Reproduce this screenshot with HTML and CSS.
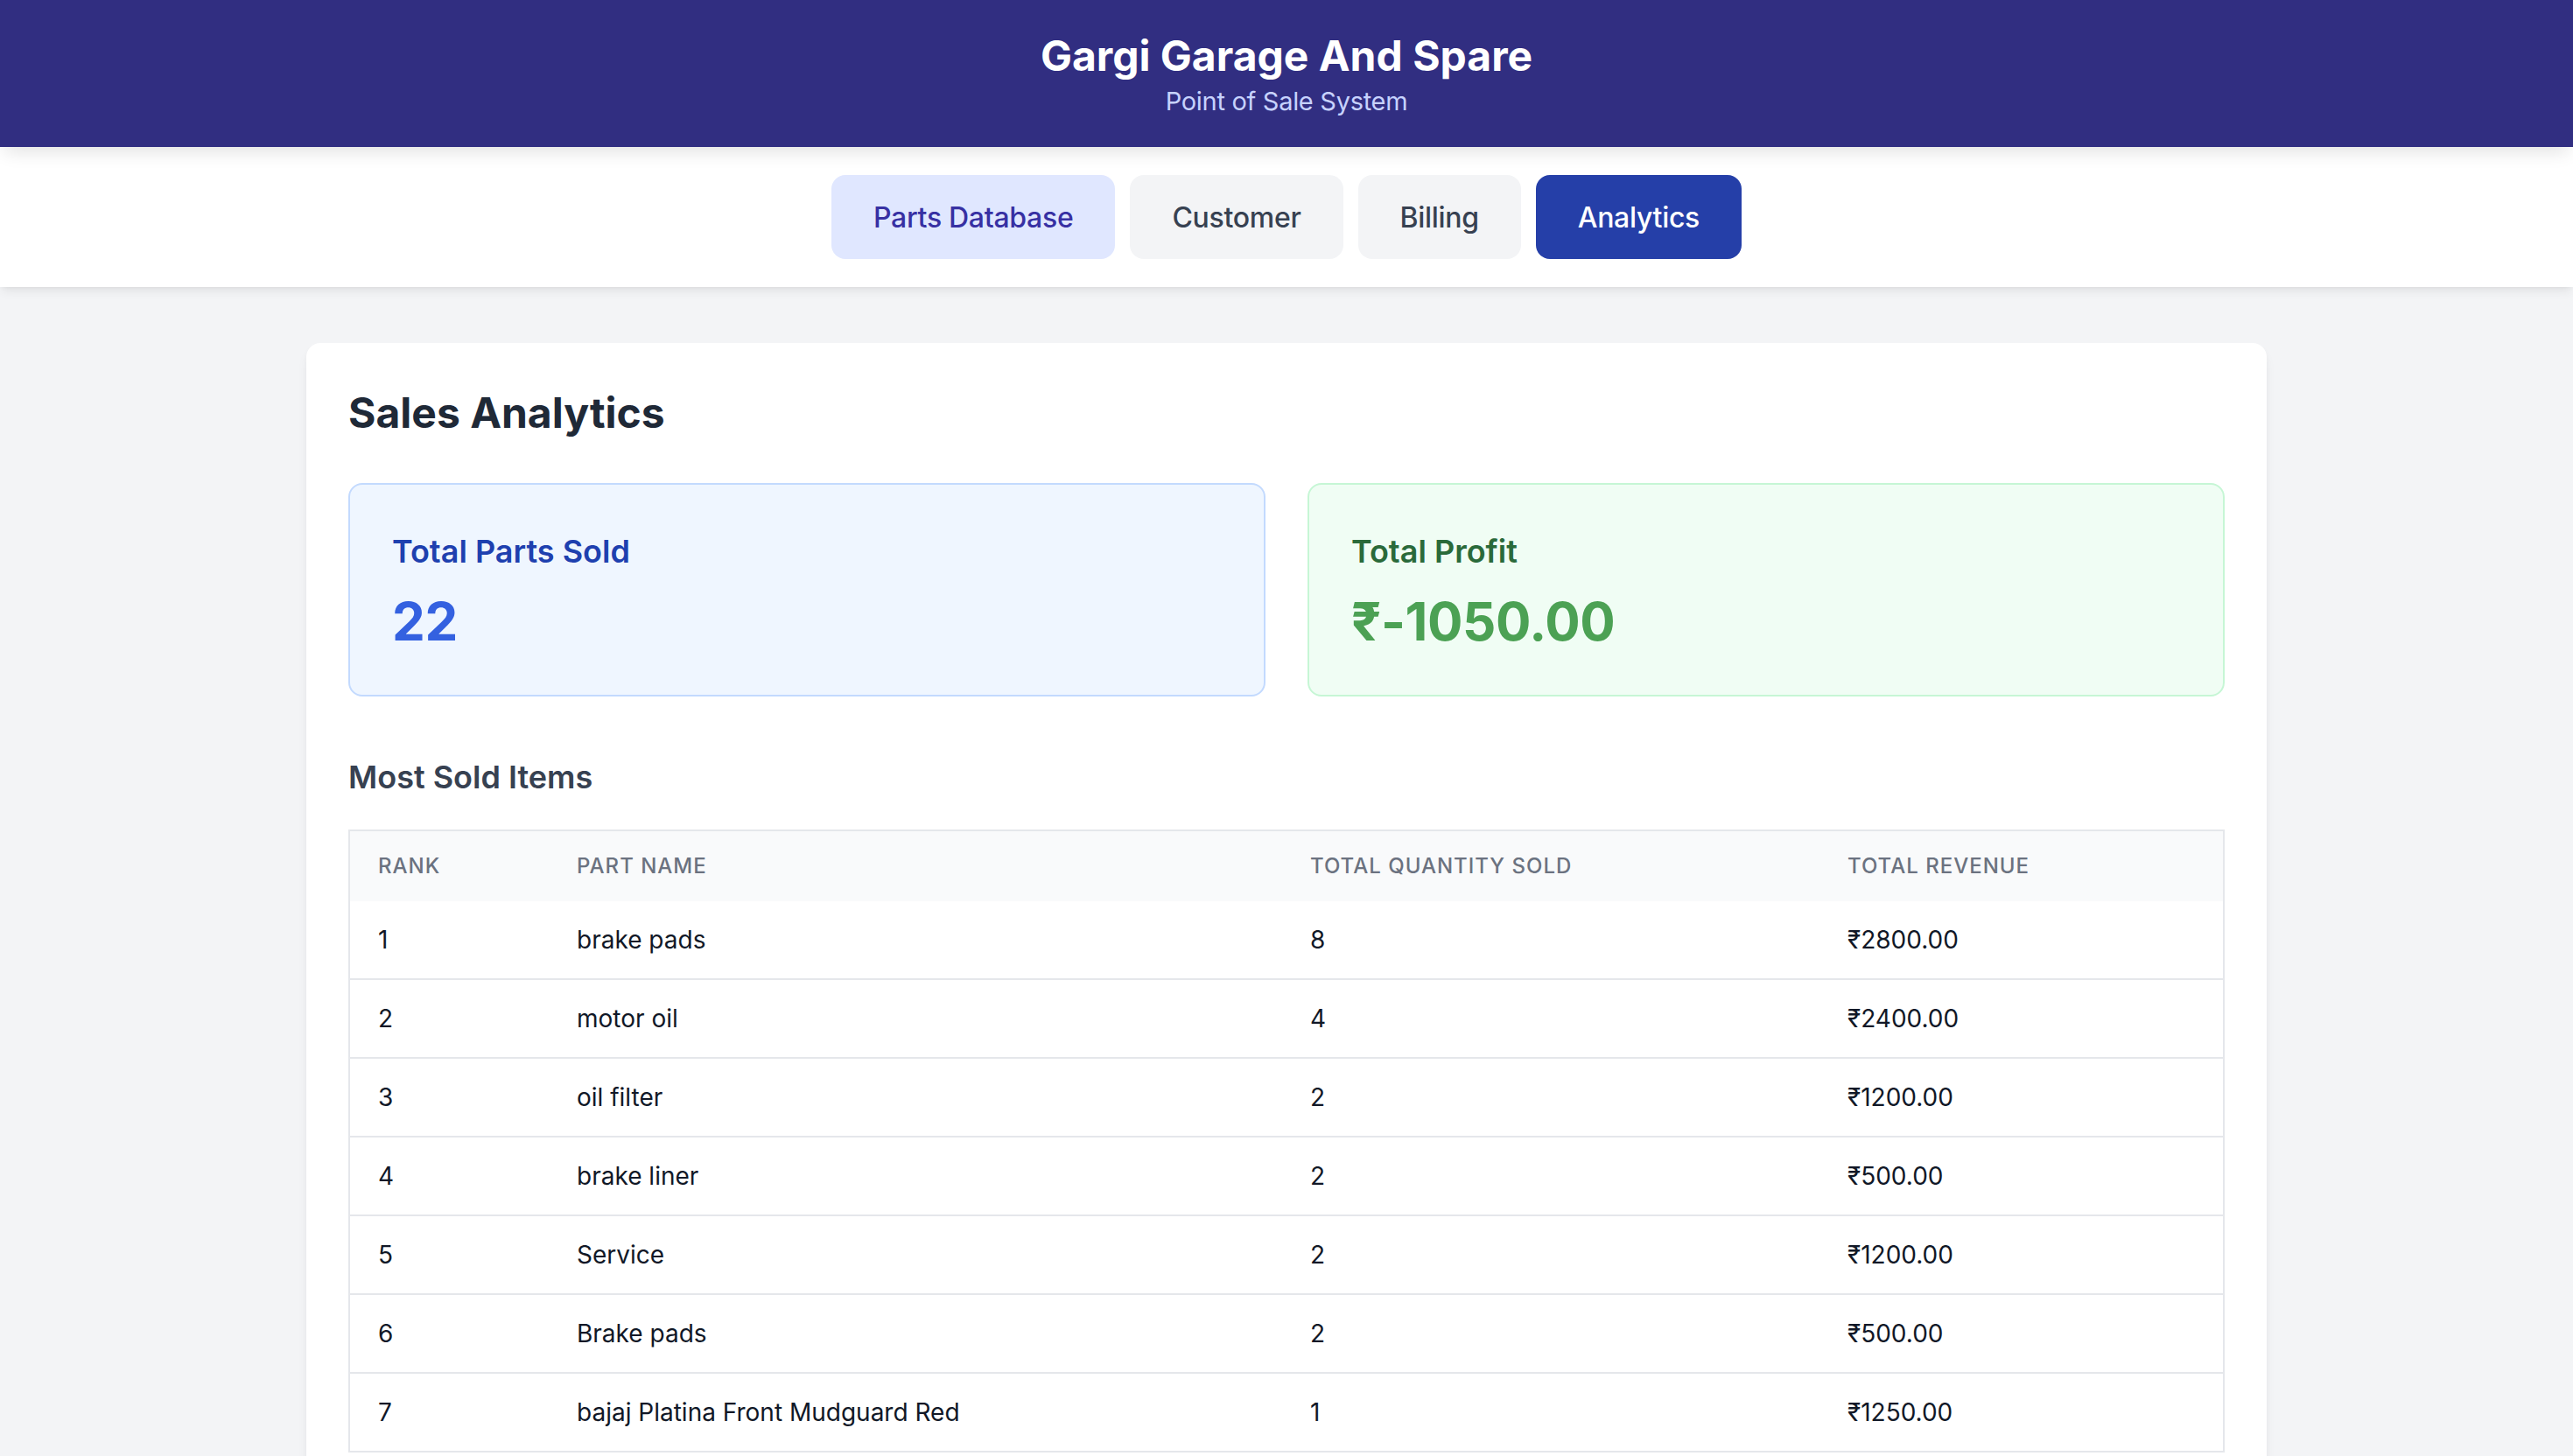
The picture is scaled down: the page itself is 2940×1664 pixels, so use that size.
FILE: index.html
```html
<!DOCTYPE html>
<html lang="en">
<head>
<meta charset="utf-8">
<title>Gargi Garage And Spare - POS</title>
<link rel="stylesheet" href="styles.css">
</head>
<body>
<header class="app-header">
  <h1 class="app-title">Gargi Garage And Spare</h1>
  <p class="app-subtitle">Point of Sale System</p>
</header>
<nav class="tabs">
  <button class="tab tab-soft">Parts Database</button>
  <button class="tab">Customer</button>
  <button class="tab">Billing</button>
  <button class="tab tab-active">Analytics</button>
</nav>
<main class="page">
  <section class="card">
    <h2 class="card-title">Sales Analytics</h2>
    <div class="stats">
      <div class="stat stat-blue">
        <h3 class="stat-label">Total Parts Sold</h3>
        <p class="stat-value">22</p>
      </div>
      <div class="stat stat-green">
        <h3 class="stat-label">Total Profit</h3>
        <p class="stat-value">₹-1050.00</p>
      </div>
    </div>
    <h3 class="section-title">Most Sold Items</h3>
    <table class="items">
      <colgroup>
        <col class="c-rank"><col class="c-name"><col class="c-qty"><col class="c-rev">
      </colgroup>
      <thead>
        <tr><th>Rank</th><th>Part Name</th><th>Total Quantity Sold</th><th>Total Revenue</th></tr>
      </thead>
      <tbody>
        <tr><td>1</td><td>brake pads</td><td>8</td><td>₹2800.00</td></tr>
        <tr><td>2</td><td>motor oil</td><td>4</td><td>₹2400.00</td></tr>
        <tr><td>3</td><td>oil filter</td><td>2</td><td>₹1200.00</td></tr>
        <tr><td>4</td><td>brake liner</td><td>2</td><td>₹500.00</td></tr>
        <tr><td>5</td><td>Service</td><td>2</td><td>₹1200.00</td></tr>
        <tr><td>6</td><td>Brake pads</td><td>2</td><td>₹500.00</td></tr>
        <tr><td>7</td><td>bajaj Platina Front Mudguard Red</td><td>1</td><td>₹1250.00</td></tr>
      </tbody>
    </table>
  </section>
</main>
</body>
</html>
```
FILE: styles.css
```css
html {
  scrollbar-width: none;
}
html::-webkit-scrollbar {
  display: none;
}
* {
  box-sizing: border-box;
}
body {
  margin: 0;
  background: #f3f4f6;
  font-family: Inter, "Noto Sans", "Liberation Sans", sans-serif;
  color: #111827;
}
.app-header {
  position: relative;
  z-index: 2;
  background: #312e81;
  color: #fff;
  text-align: center;
  padding: 35px 0 30px;
  height: 168px;
  box-shadow: 0 10px 20px -5px rgba(0, 0, 0, 0.12);
}
.app-title {
  margin: 0;
  font-size: 48px;
  line-height: 58px;
  font-weight: 700;
}
.app-subtitle {
  margin: 0;
  font-size: 29px;
  line-height: 45px;
  color: #c7d2fe;
  letter-spacing: -0.3px;
}
.tabs {
  position: relative;
  z-index: 1;
  background: #fff;
  height: 160px;
  display: flex;
  justify-content: center;
  align-items: center;
  gap: 17px;
  box-shadow: 0 6px 12px -2px rgba(0, 0, 0, 0.08), 0 3px 6px -3px rgba(0, 0, 0, 0.06);
}
.tab {
  border: 0;
  height: 96px;
  padding: 0 48px;
  border-radius: 16px;
  background: #f3f4f6;
  color: #374151;
  font-family: inherit;
  font-size: 32px;
  font-weight: 500;
  letter-spacing: -0.3px;
  line-height: 45px;
}
.tab-soft {
  background: #e0e7ff;
  color: #3730a3;
}
.tab-active {
  background: #253fa8;
  color: #fff;
}
.page {
  padding: 64px 0;
}
.card {
  width: 2240px;
  margin: 0 auto;
  background: #fff;
  border-radius: 16px;
  padding: 48px;
  box-shadow: 0 8px 14px -3px rgba(0, 0, 0, 0.08), 0 3px 6px -2px rgba(0, 0, 0, 0.05);
}
.card-title {
  margin: 0 0 48px;
  font-size: 48px;
  line-height: 64px;
  font-weight: 700;
  color: #1f2937;
}
.stats {
  display: grid;
  grid-template-columns: 1fr 1fr;
  gap: 48px;
  margin-bottom: 64px;
}
.stat {
  border: 2px solid;
  border-radius: 16px;
  padding: 48px;
}
.stat-blue {
  background: #eff6ff;
  border-color: #c3dafe;
}
.stat-green {
  background: #f0fdf4;
  border-color: #c6f6d5;
}
.stat-label {
  margin: 0 0 16px;
  font-size: 36px;
  line-height: 56px;
  font-weight: 600;
}
.stat-value {
  margin: 0;
  font-size: 60px;
  line-height: 72px;
  font-weight: 700;
  letter-spacing: -0.4px;
}
.stat-blue .stat-label {
  color: #1e40af;
}
.stat-blue .stat-value {
  color: #3461e0;
}
.stat-green .stat-label {
  color: #2a6a3a;
}
.stat-green .stat-value {
  color: #4ca154;
}
.section-title {
  margin: 0 0 32px;
  font-size: 36px;
  line-height: 56px;
  font-weight: 600;
  color: #374151;
}
.items {
  width: 100%;
  border-collapse: collapse;
  border: 2px solid #e5e7eb;
  table-layout: fixed;
}
.c-rank { width: 228px; }
.c-name { width: 838px; }
.c-qty { width: 614px; }
.items thead tr {
  background: #f9fafb;
}
.items th {
  text-align: left;
  padding: 24px 32px;
  font-size: 24px;
  line-height: 32px;
  font-weight: 500;
  color: #6b7280;
  text-transform: uppercase;
  letter-spacing: 1px;
}
.items td {
  padding: 24px 32px;
  font-size: 28px;
  line-height: 40px;
  color: #111827;
  border-top: 2px solid #e5e7eb;
}
.items tbody tr:first-child td {
  border-top: 0;
}
```
